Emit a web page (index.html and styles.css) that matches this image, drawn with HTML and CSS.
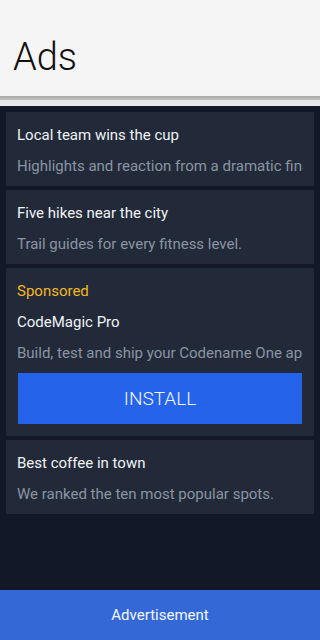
FILE: index.html
```html
<!DOCTYPE html>
<html lang="en">
<head>
  <meta charset="UTF-8" />
  <meta name="viewport" content="width=device-width, initial-scale=1" />
  <title>Ads</title>
  <link rel="stylesheet" href="styles.css">
</head>
<body>

  <header class="title-bar">
    <h1>Ads</h1>
  </header>
  <div class="title-shadow"></div>

  <main class="feed">
    <div class="card">
      <div class="row title">Local team wins the cup</div>
      <div class="row sub">Highlights and reaction from a dramatic final</div>
    </div>

    <div class="card">
      <div class="row title">Five hikes near the city</div>
      <div class="row sub">Trail guides for every fitness level.</div>
    </div>

    <!-- sponsored item -->
    <div class="card">
      <div class="row sponsored">Sponsored</div>
      <div class="row title">CodeMagic Pro</div>
      <div class="row sub">Build, test and ship your Codename One apps</div>
      <button class="install">INSTALL</button>
    </div>

    <div class="card">
      <div class="row title">Best coffee in town</div>
      <div class="row sub">We ranked the ten most popular spots.</div>
    </div>
  </main>

  <footer class="ad-bar">Advertisement</footer>

</body>
</html>
```

FILE: styles.css
```css
html, body {
  height: 100%;
}

body {
  margin: 0;
  font-family: Roboto, "Liberation Sans", sans-serif;
  background: #121827;
  display: flex;
  flex-direction: column;
}

.title-bar {
  background: #f5f5f5;
  height: 96px;
  display: flex;
  align-items: center;
  padding: 0 13px;
}

.title-bar h1 {
  margin: 0;
  font-size: 38px;
  font-weight: 300;
  color: #111;
  padding-top: 18px;
}

.title-shadow {
  height: 10px;
  background: linear-gradient(#a9a9a9 0, #c4c4c4 4px, #e4e4e4 4px, #e9e9e9 10px);
}

.feed {
  flex: 1;
  padding: 6px;
  display: flex;
  flex-direction: column;
  gap: 4px;
}

.card {
  background: #222a39;
  padding: 13px 0 10px;
  display: flex;
  flex-direction: column;
  gap: 11px;
}

.row {
  margin: 0 11px;
  font-size: 15px;
  line-height: 20px;
  white-space: nowrap;
  overflow: hidden;
}

.title {
  color: #f1f3f6;
}

.sub {
  color: #8b94a2;
}

.sponsored {
  color: #f4b625;
}

.install {
  margin: -1px 12px 2px;
  height: 51px;
  border: none;
  background: #2563eb;
  color: #f4f7ff;
  font-family: inherit;
  font-size: 19px;
  font-weight: 300;
}

.ad-bar {
  height: 50px;
  background: #3468d6;
  color: #f4f7ff;
  font-size: 15px;
  display: flex;
  align-items: center;
  justify-content: center;
}
```
